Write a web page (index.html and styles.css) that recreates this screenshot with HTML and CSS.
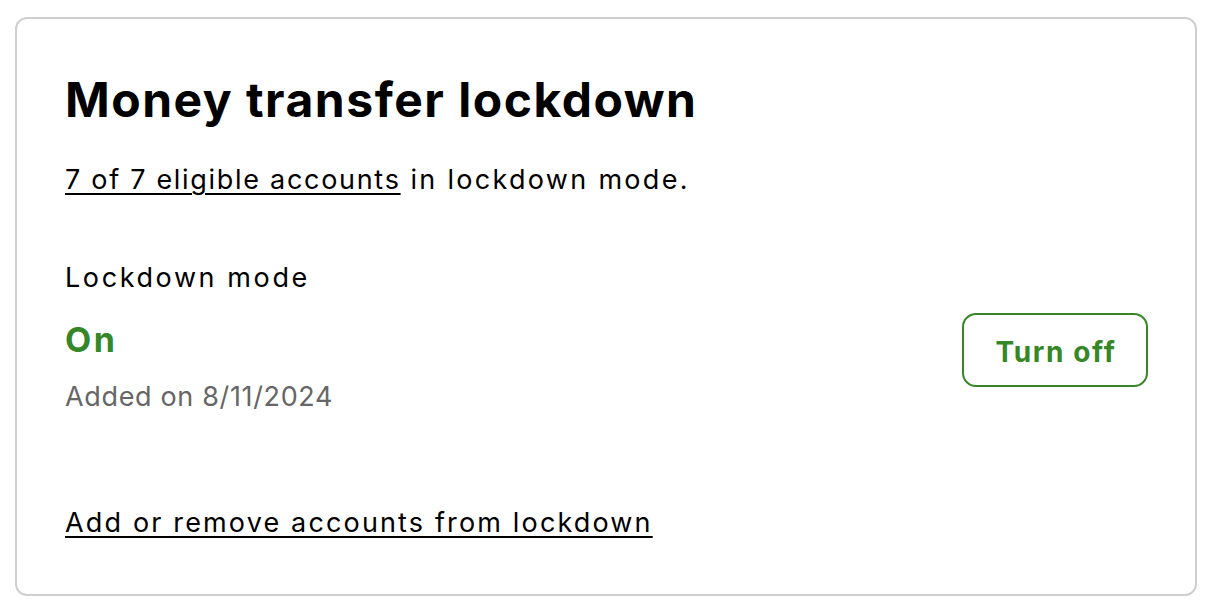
FILE: index.html
```html
<!DOCTYPE html>
<html lang="en">
<head>
<meta charset="utf-8">
<title>Money transfer lockdown</title>
<link rel="stylesheet" href="styles.css">
</head>
<body>
<section class="card">
  <h1 class="title">Money transfer lockdown</h1>
  <p class="summary"><a href="#" class="link link-accounts">7 of 7 eligible accounts</a> in lockdown mode.</p>
  <div class="mode-row">
    <div class="mode-info">
      <div class="mode-label">Lockdown mode</div>
      <div class="mode-status">On</div>
      <div class="mode-date">Added on 8/11/2024</div>
    </div>
    <button class="btn-outline" type="button">Turn off</button>
  </div>
  <a href="#" class="link footer-link">Add or remove accounts from lockdown</a>
</section>
</body>
</html>
```
FILE: styles.css
```css
html, body {
  margin: 0;
  background: #ffffff;
}
body {
  padding: 17px 13px 16px 15px;
  font-family: Inter, "Noto Sans", sans-serif;
  color: #000000;
}
.card {
  box-sizing: border-box;
  height: 579px;
  border: 2px solid #cfcfcf;
  border-radius: 12px;
  padding: 52px 47px 0 48px;
  display: flex;
  flex-direction: column;
}
.title {
  margin: 0;
  font-size: 48px;
  line-height: 58px;
  font-weight: 700;
  letter-spacing: 1.5px;
}
.summary {
  margin: 34px 0 0 0;
  font-size: 27px;
  line-height: 34px;
  letter-spacing: 2.3px;
}
.link-accounts {
  letter-spacing: 1.7px;
}
.link {
  color: #000000;
  text-decoration: underline;
  text-underline-offset: 4px;
  text-decoration-thickness: 2px;
}
.mode-row {
  margin-top: 64px;
  display: flex;
  justify-content: space-between;
  align-items: flex-start;
}
.mode-info {
  display: flex;
  flex-direction: column;
}
.mode-label {
  font-size: 27px;
  line-height: 34px;
  letter-spacing: 2.6px;
}
.mode-status {
  margin-top: 25px;
  font-size: 34px;
  line-height: 40px;
  font-weight: 700;
  letter-spacing: 2.5px;
  color: #368727;
}
.mode-date {
  margin-top: 20px;
  font-size: 27px;
  line-height: 34px;
  letter-spacing: 0.65px;
  color: #666666;
}
.btn-outline {
  margin-top: 52px;
  width: 186px;
  height: 74px;
  box-sizing: border-box;
  padding: 3px 0 0 2px;
  border: 2px solid #368727;
  border-radius: 14px;
  background: #ffffff;
  color: #368727;
  font-family: Inter, "Noto Sans", sans-serif;
  font-size: 28px;
  font-weight: 700;
  letter-spacing: 1.6px;
}
.footer-link {
  margin-top: 92px;
  align-self: flex-start;
  font-size: 27px;
  line-height: 34px;
  letter-spacing: 2.15px;
}
```
